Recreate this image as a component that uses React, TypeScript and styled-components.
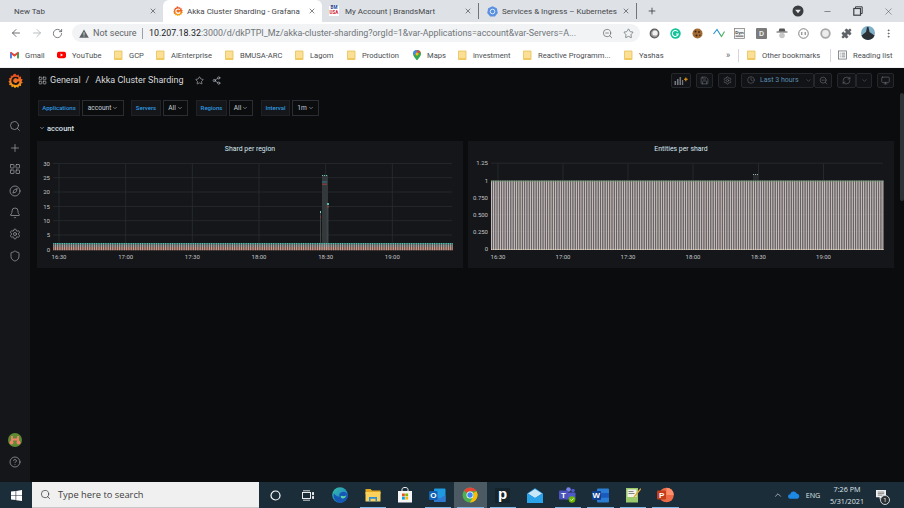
import React from 'react';
import styled, { createGlobalStyle } from 'styled-components';
import {
  ArrowLeft, ArrowRight, RotateCw, Star, ZoomOut, X, Plus, Minus, Puzzle, EllipsisVertical,
  Search, LayoutGrid, Compass, Bell, Settings, Shield, Share2, Save, Clock, ChevronDown,
  RefreshCw, Monitor, CircleHelp, ChevronUp,
} from 'lucide-react';

const Global = createGlobalStyle`
  html, body { margin: 0; padding: 0; background: #0b0c0e; overflow: hidden; }
  #root { width: 904px; height: 508px; overflow: hidden; }
  * { box-sizing: border-box; }
`;

const Page = styled.div`
  width: 904px; height: 508px; display: flex; flex-direction: column;
  font-family: Roboto, "Liberation Sans", sans-serif;
`;

/* ---------- tab strip ---------- */
const TabStrip = styled.div`
  height: 22px; background: #dee1e6; display: flex; align-items: stretch; flex: none;
`;
const Tab = styled.div<{ $w: number; $active?: boolean; $sep?: boolean; $pl?: number }>`
  width: ${p => p.$w}px; flex: none; display: flex; align-items: center; gap: 3px;
  padding: 0 6px 0 ${p => p.$pl ?? 14}px;
  font-size: 8px; color: #45484c;
  background: ${p => (p.$active ? '#ffffff' : 'transparent')};
  border-radius: ${p => (p.$active ? '6px 6px 0 0' : '0')};
  border-right: ${p => (p.$sep ? '1px solid #70757a' : '0')};
  background-clip: padding-box;
`;
const SepTab = styled(Tab)`
  height: 16px; align-self: center;
`;
const TabTitle = styled.span`
  flex: 1; overflow: hidden; white-space: nowrap; min-width: 0;
`;
const Favicon = styled.span`
  width: 11px; height: 11px; flex: none; display: flex; align-items: center; justify-content: center; margin-right: 1px;
`;
const BMIcon = styled.span`
  width: 10px; height: 10px; flex: none; display: flex; flex-direction: column; align-items: center; justify-content: center;
  font-size: 4.5px; line-height: 4.6px; font-weight: 700; color: #1d3f94; margin-right: 3px; background: #fff;
  & b { color: #d0142c; font-weight: 700; }
`;
const TabAdd = styled.div`
  width: 30px; display: flex; align-items: center; justify-content: center; color: #3c4043;
`;
const WinControls = styled.div`
  margin-left: auto; display: flex; align-items: center; color: #3c4043;
`;
const WinBtn = styled.span<{ $w: number }>`
  width: ${p => p.$w}px; display: flex; align-items: center; justify-content: center;
`;

/* ---------- toolbar ---------- */
const Toolbar = styled.div`
  height: 22px; background: #fff; display: flex; align-items: center; flex: none; padding-left: 5px;
`;
const NavBtn = styled.span<{ $dim?: boolean; $w?: number }>`
  width: ${p => p.$w ?? 21}px; display: flex; align-items: center; justify-content: center; flex: none;
  color: ${p => (p.$dim ? '#b3b6ba' : '#5f6368')};
`;
const Omnibox = styled.div`
  width: 568px; height: 18px; margin-left: 4px; flex: none; background: #f1f3f4; border-radius: 9px;
  display: flex; align-items: center; padding-left: 7px; font-size: 9px; color: #5f6368;
`;
const Secure = styled.span`
  margin-left: 4px; white-space: nowrap; width: 44px; flex: none;
`;
const OmniSep = styled.span`
  width: 1px; height: 11px; background: #9aa0a6; margin: 0 6px 0 5px; flex: none;
`;
const Url = styled.span`
  width: 442px; flex: none; white-space: nowrap; overflow: hidden; color: #70757a; font-size: 8.9px;
  & b { font-weight: 400; color: #202124; }
`;
const OmniIcon = styled.span<{ $ml: number }>`
  margin-left: ${p => p.$ml}px; display: flex; color: #5f6368; flex: none;
`;
const Extensions = styled.div`
  margin-left: 4px; display: flex; align-items: center;
`;
const Ext = styled.span`
  width: 21.3px; display: flex; align-items: center; justify-content: center; flex: none; color: #5f6368;
`;

/* ---------- bookmarks ---------- */
const BookmarkBar = styled.div`
  height: 24px; background: #fff; border-bottom: 1px solid #f1f2f3; display: flex; align-items: center; flex: none;
  padding: 0 0 1px 10px; font-size: 7.6px; color: #4a4d51;
`;
const Bookmark = styled.div<{ $w: number }>`
  width: ${p => p.$w}px; flex: none; display: flex; align-items: center; gap: 6px; white-space: nowrap; overflow: hidden;
`;
const BmIcon = styled.span`
  width: 9px; height: 10px; display: flex; align-items: center; justify-content: center; flex: none;
`;
const BarSep = styled.span<{ $mr: number }>`
  width: 1px; height: 13px; background: #d5d7da; margin-right: ${p => p.$mr}px; flex: none;
`;
const More = styled.span`
  width: 12px; flex: none; font-size: 9px; color: #5f6368;
`;

/* ---------- grafana ---------- */
const Body = styled.div`
  height: 414px; display: flex; flex: none; background: #0b0c0e;
`;
const Sidebar = styled.nav`
  width: 30px; flex: none; background: #141619; display: flex; flex-direction: column; align-items: center; color: #9a9da3;
  padding-bottom: 9px;
`;
const LogoCell = styled.div`
  height: 24px; flex: none; display: flex; align-items: center; margin-bottom: 23px;
`;
const SideItem = styled.div`
  height: 21.7px; flex: none; display: flex; align-items: center; justify-content: center;
`;
const SideBottom = styled.div`
  margin-top: auto; display: flex; flex-direction: column; align-items: center;
`;
const Main = styled.main`
  flex: 1; min-width: 0; position: relative; display: flex; flex-direction: column;
`;
const ScrollThumb = styled.div`
  position: absolute; right: 0; top: 25px; width: 4px; height: 108px; background: #2c3235; border-radius: 2px;
`;
const DashNav = styled.div`
  height: 24px; flex: none; display: flex; align-items: center; padding: 0 10px 0 8px; color: #d8d9da;
`;
const Crumb = styled.div`
  display: flex; align-items: center; font-size: 9px; color: #d8d9da; white-space: nowrap;
`;
const CrumbIcon = styled.span`
  display: flex; margin-right: 3px; color: #b9bcc0;
`;
const CrumbSlash = styled.span`
  margin: 0 6px 0 5px;
`;
const NavAction = styled.span<{ $ml: number }>`
  display: flex; margin-left: ${p => p.$ml}px; color: #c7d0d9;
`;
const NavRight = styled.div`
  margin-left: auto; display: flex; align-items: center; gap: 5px;
`;
const ToolBtn = styled.span<{ $w: number }>`
  width: ${p => p.$w}px; height: 15px; background: #111316; border: 1px solid #24272c; border-radius: 2px;
  display: flex; align-items: center; justify-content: center; color: #71767d; flex: none;
`;
const ToolGroup = styled.div`
  display: flex;
`;
const TimeText = styled.span`
  font-size: 7px; color: #5a8cae; margin: 0 6px 0 5px; white-space: nowrap;
`;
const TimeBtn = styled(ToolBtn)`
  justify-content: flex-start; padding-left: 5px;
`;
const Submenu = styled.div`
  flex: none; margin-top: 8px; padding-left: 8px; display: flex; height: 15.5px;
`;
const VarGroup = styled.div<{ $mr: number }>`
  display: flex; gap: 2px; margin-right: ${p => p.$mr}px;
`;
const VarLabel = styled.span<{ $w: number }>`
  width: ${p => p.$w}px; background: #141619; border: 1px solid #1f2126; color: #2f9ae0;
  font-size: 6px; font-weight: 500; padding-bottom: 1px; display: flex; align-items: center; justify-content: center; white-space: nowrap;
`;
const VarValue = styled.span<{ $w: number }>`
  width: ${p => p.$w}px; background: #0b0c0e; border: 1px solid #2a2d32; color: #c7d0d9;
  font-size: 6.6px; display: flex; align-items: center; justify-content: center; gap: 1px; white-space: nowrap;
`;
const RowTitle = styled.div`
  flex: none; height: 14px; margin-top: 5.5px; padding-left: 9px; display: flex; align-items: center; gap: 2px;
  font-size: 7.5px; font-weight: 500; color: #d8e2ea;
`;
const PanelRow = styled.div`
  flex: none; margin-top: 6px; padding-left: 7px; display: flex; gap: 5px;
`;
const Panel = styled.section`
  width: 426px; height: 127px; background: #141619; border: 0; display: flex; flex-direction: column;
`;
const PanelTitle = styled.h3`
  margin: 0; height: 14px; flex: none; padding-top: 1.5px; display: flex; align-items: center; justify-content: center;
  font-size: 6.9px; font-weight: 400; color: #d8e6ef;
`;
const ChartSvg = styled.svg`
  display: block; flex: none;
  & text { font-family: Roboto, "Liberation Sans", sans-serif; font-size: 6px; fill: #c3c5c8; }
`;

/* ---------- taskbar ---------- */
const Taskbar = styled.footer`
  height: 26px; flex: none; background: #1b2d39; display: flex; align-items: stretch;
`;
const Cell = styled.div<{ $w: number; $active?: boolean; $running?: boolean }>`
  width: ${p => p.$w}px; flex: none; position: relative; display: flex; align-items: center; justify-content: center;
  background: ${p => (p.$active ? '#4c5a64' : 'transparent')};
  ${p => p.$running && `&::after { content: ''; position: absolute; left: 3px; right: 3px; bottom: 0; height: 1px; background: #7db8e6; }`}
`;
const TaskSearch = styled.div`
  width: 227px; flex: none; background: #f0f0f0; border-bottom: 1px solid #c8c8c8; display: flex; align-items: center;
  padding-left: 8px; gap: 7px; font-size: 9.3px; color: #3d3d3d; font-family: "Open Sans", Roboto, sans-serif;
`;
const Tray = styled.div`
  margin-left: auto; padding-right: 12px; display: flex; align-items: center; color: #e8ecef; font-family: "Open Sans", Roboto, sans-serif;
`;
const TrayText = styled.span<{ $w: number }>`
  width: ${p => p.$w}px; flex: none; font-size: 7.2px; text-align: center; line-height: 12px; color: #dfe4e8;
`;
const NotifyCell = styled.div`
  width: 22px; flex: none; position: relative; height: 100%; display: flex; align-items: center; justify-content: center;
`;
const Badge = styled.span`
  position: absolute; right: 2px; bottom: 3px; width: 10px; height: 10px; border-radius: 50%;
  background: #2a2f33; border: 1px solid #cfd3d6; color: #fff; font-size: 6px; display: flex; align-items: center; justify-content: center;
`;
const AppGlyph = styled.text`
  font-family: "Liberation Sans", sans-serif; font-weight: 700;
`;

/* ---------- drawings ---------- */
const GrafanaLogo = ({ s, id }: { s: number; id: string }) => (
  <svg width={s} height={s} viewBox="0 0 24 24">
    <defs>
      <linearGradient id={id} x1="0" y1="0" x2="0" y2="1">
        <stop offset="0" stopColor="#e8441f" />
        <stop offset="0.6" stopColor="#f27a20" />
        <stop offset="1" stopColor="#fbb40a" />
      </linearGradient>
    </defs>
    <path fill={`url(#${id})`} fillRule="evenodd"
      d="M12 1l2 3 3-1.5.7 3.3 3.4-.2-.5 3.4 3 1.3-1.9 2.8 2 2.6-3 1.5.2 3.4-3.4-.3-1 3.2-3-1.6-2.5 2.4-2-2.7-3.2 1.2-.6-3.4-3.4-.2.8-3.3L.6 14l2.2-2.6L1.3 8.6l3.2-1-.2-3.4 3.4.3L9 1.4z
      M12 6a6.5 6.5 0 1 0 6.4 7.6h-3a3.6 3.6 0 1 1-.4-3.6l2.3-2A6.5 6.5 0 0 0 12 6z" />
  </svg>
);

const Folder = () => (
  <svg width="9" height="10" viewBox="0 0 9 10">
    <path d="M0.5 1h7.5v8.5H0.5z" fill="#fadf94" stroke="#e6bf56" strokeWidth="0.8" />
    <path d="M1 8h7v1.5H1z" fill="#f2c95c" />
  </svg>
);

const Gmail = () => (
  <svg width="10" height="8" viewBox="0 0 10 8">
    <path d="M0 1.2v6.3h2V3.6L5 6l3-2.4v3.9h2V1.2L8.8.3 5 3.3 1.2.3z" fill="#ea4335" />
    <path d="M0 1.2v6.3h2V3z" fill="#4285f4" />
    <path d="M8 3v4.5h2V1.2z" fill="#34a853" />
  </svg>
);
const YouTube = () => (
  <svg width="10" height="8" viewBox="0 0 10 8">
    <rect width="10" height="7" y="0.5" rx="2" fill="#f00" />
    <path d="M4 2.4L6.8 4 4 5.6z" fill="#fff" />
  </svg>
);
const MapsPin = () => (
  <svg width="8" height="11" viewBox="0 0 8 11">
    <path d="M4 0a4 4 0 0 1 4 4c0 2.6-2.8 4-4 7C2.800 8 0 6.600 0 4a4 4 0 0 1 4-4z" fill="#34a853" />
    <path d="M1.200 1.200A4 4 0 0 1 4 0l0 2.500L1.800 5.300 0.300 4a4 4 0 0 1 .9-2.800z" fill="#4285f4" />
    <path d="M4 0a4 4 0 0 1 3.700 2.600L4 3z" fill="#ea4335" />
    <circle cx="4" cy="4" r="1.500" fill="#fbbc04" />
  </svg>
);
const Kube = () => (
  <svg width="11" height="11" viewBox="0 0 11 11">
    <path d="M5.500 0.300l4.300 2 1 4.600-3 3.700H3.200l-3-3.700 1-4.600z" fill="#5b8fe0" />
    <circle cx="5.500" cy="5.500" r="2.300" fill="none" stroke="#e8f0fc" strokeWidth="0.9" />
  </svg>
);
const Warn = () => (
  <svg width="10" height="9" viewBox="0 0 10 9"><path d="M5 0.500L9.800 8.800H0.200z" fill="#5f6368" /><path d="M4.600 3.300h.8v3h-.8zM4.600 6.800h.8v.8h-.8z" fill="#f1f3f4" /></svg>
);

const ExtRing = () => (
  <svg width="11" height="11" viewBox="0 0 11 11"><circle cx="5.500" cy="5.500" r="4.300" fill="#9a9a9a" /><circle cx="6" cy="5" r="2.600" fill="#f1f1f1" /><circle cx="5.500" cy="5.500" r="4.300" fill="none" stroke="#5c5c5c" strokeWidth="1.200" /></svg>
);
const ExtGrammarly = () => (
  <svg width="11" height="11" viewBox="0 0 11 11"><circle cx="5.500" cy="5.500" r="5.200" fill="#15c39a" /><path d="M7.800 3.700A3 3 0 1 0 8.300 6H6" fill="none" stroke="#fff" strokeWidth="1.100" /></svg>
);
const ExtCookie = () => (
  <svg width="11" height="11" viewBox="0 0 11 11"><circle cx="5.500" cy="5.500" r="5" fill="#a06a35" /><circle cx="3.500" cy="3.500" r="1" fill="#3f2410" /><circle cx="7" cy="4" r="0.900" fill="#3f2410" /><circle cx="4.500" cy="7.500" r="1" fill="#3f2410" /><circle cx="7.800" cy="7.200" r="0.800" fill="#3f2410" /></svg>
);
const ExtWave = () => (
  <svg width="12" height="10" viewBox="0 0 12 10"><path d="M0.500 6L4 1.500 7.500 7" fill="none" stroke="#2a93c9" strokeWidth="1.100" /><path d="M7 6.500l1.500 2L11.500 3.500" fill="none" stroke="#44b25b" strokeWidth="1.100" /></svg>
);
const ExtDyn = () => (
  <svg width="11" height="11" viewBox="0 0 11 11"><rect x="0.500" y="0.500" width="10" height="10" fill="#f4f4f4" stroke="#777" strokeWidth="0.700" /><AppGlyph x="1.300" y="5.500" fontSize="4.400" fill="#333">Dyn</AppGlyph><rect x="1.500" y="7.500" width="8" height="1.300" fill="#777" /></svg>
);
const ExtD = () => (
  <svg width="11" height="11" viewBox="0 0 11 11"><rect width="11" height="11" rx="1" fill="#7b7b7b" /><AppGlyph x="3" y="8" fontSize="7" fill="#eee">D</AppGlyph></svg>
);
const ExtSpy = () => (
  <svg width="12" height="11" viewBox="0 0 12 11"><path d="M3.500 0.500h5l1 3h-7z" fill="#555" /><rect x="0.500" y="3.500" width="11" height="1" fill="#555" /><circle cx="6" cy="7.500" r="2.800" fill="#c7c7c7" /></svg>
);
const ExtFace = () => (
  <svg width="11" height="11" viewBox="0 0 11 11"><circle cx="5.500" cy="5.500" r="4.800" fill="#fafafa" stroke="#666" strokeWidth="0.800" /><path d="M3.800 4v3M7.200 4v3" stroke="#666" strokeWidth="0.900" /></svg>
);
const ExtGrey = () => (
  <svg width="11" height="11" viewBox="0 0 11 11"><circle cx="5.500" cy="5.500" r="4.300" fill="#ececec" stroke="#a8a8a8" strokeWidth="1.800" /></svg>
);
const Avatar = () => (
  <svg width="14" height="14" viewBox="0 0 14 14">
    <circle cx="7" cy="7" r="7" fill="#7fb0c7" />
    <path d="M0.500 9.500L5 6l1-5h1.500l1 5 5 3.500A7 7 0 0 1 .5 9.500z" fill="#2b3036" />
  </svg>
);
const ProfileDot = () => (
  <svg width="12" height="12" viewBox="0 0 12 12"><circle cx="6" cy="6" r="5.500" fill="#3a3d40" /><path d="M3.200 4.700h5.600L6 8.300z" fill="#e8e8e8" /></svg>
);
const Restore = () => (
  <svg width="10" height="10" viewBox="0 0 10 10"><path d="M2.500 2.500V.8h6.700v6.700H7.500" fill="none" stroke="#3c4043" strokeWidth="1" /><rect x=".8" y="2.500" width="6.700" height="6.700" fill="none" stroke="#3c4043" strokeWidth="1.200" /></svg>
);
const ReadingList = () => (
  <svg width="10" height="10" viewBox="0 0 10 10"><rect x="0.500" y="0.500" width="9" height="9" fill="none" stroke="#5f6368" strokeWidth="0.800" /><path d="M2 3h1M4 3h4M2 5h1M4 5h4M2 7h1M4 7h4" stroke="#5f6368" strokeWidth="0.800" /></svg>
);
const PanelAddIcon = () => (
  <svg width="14" height="9" viewBox="0 0 14 9"><path d="M0.500 9V5h1.600v4zM3 9V3h1.600v6zM5.500 9V1h1.600v8zM8 9V4h1.200v5z" fill="#71767d" /><path d="M10 3.300h3.700M11.850 1.400v3.800" stroke="#eb9b18" strokeWidth="1.100" /></svg>
);

const WinLogo = () => (
  <svg width="11" height="11" viewBox="0 0 11 11"><path d="M0 1.600L4.600 1v4.200H0zM5.200.9L11 0v5.200H5.200zM0 5.800h4.600V10L0 9.400zM5.200 5.800H11V11l-5.800-.8z" fill="#fff" /></svg>
);
const Cortana = () => (
  <svg width="11" height="11" viewBox="0 0 11 11"><circle cx="5.500" cy="5.500" r="4.500" fill="none" stroke="#fff" strokeWidth="1.200" /></svg>
);
const TaskView = () => (
  <svg width="12" height="11" viewBox="0 0 12 11"><rect x="0.500" y="2.500" width="8" height="6" fill="none" stroke="#fff" strokeWidth="0.900" /><path d="M1 0.800h7M1 10.200h7M10.500 2.500h1.200v2.200h-1.200zM10.500 6.500h1.200v2h-1.200z" stroke="#fff" strokeWidth="0.800" fill="#fff" /></svg>
);
const Edge = () => (
  <svg width="16" height="16" viewBox="0 0 16 16">
    <defs><linearGradient id="edg" x1="0" y1="0" x2="1" y2="1"><stop offset="0" stopColor="#35c1a5" /><stop offset="1" stopColor="#1b6fd0" /></linearGradient></defs>
    <circle cx="8" cy="8" r="7.800" fill="url(#edg)" />
    <path d="M16 9.500c-.3-3-3-5-5.500-4.600C8 5.300 6.500 7.500 8 9.600c-3 .5-4.800-1.300-6-3C.5 10 3 15.500 8 15.800c3 .1 6-2 8-6.300z" fill="#1557b5" />
    <path d="M9 8.800c1.500.7 4 .6 5.400-.5-1 3-3.400 3.600-4.500 3-1.200-.7-1.400-1.700-.9-2.500z" fill="#5fd6a3" />
  </svg>
);
const Explorer = () => (
  <svg width="16" height="14" viewBox="0 0 16 14">
    <path d="M0.500 1h5l1.500 1.500h8.500V6H.5z" fill="#e2a823" />
    <path d="M0.500 4h15v9.500H.5z" fill="#fbd15b" />
    <path d="M4 9h8v4.500H10.500V10.700h-5v2.800H4z" fill="#2d8fd5" />
  </svg>
);
const Store = () => (
  <svg width="16" height="16" viewBox="0 0 16 16">
    <path d="M1 4h14v11.500H1z" fill="#f5f5f5" />
    <path d="M5 5V2.500C5 1 6.500.5 8 .5s3 .5 3 2V5" fill="none" stroke="#f5f5f5" strokeWidth="1" />
    <rect x="5" y="6.500" width="2.800" height="2.800" fill="#f25022" /><rect x="8.300" y="6.500" width="2.800" height="2.800" fill="#7fba00" />
    <rect x="5" y="9.800" width="2.800" height="2.800" fill="#00a4ef" /><rect x="8.300" y="9.800" width="2.800" height="2.800" fill="#ffb900" />
  </svg>
);
const Outlook = () => (
  <svg width="17" height="15" viewBox="0 0 17 15">
    <rect x="5" y="0.500" width="11.500" height="13.500" rx="1" fill="#1f9ae0" />
    <path d="M5 7l5.700 3.500L16.500 7v7H5z" fill="#2f78cf" />
    <rect x="0" y="3" width="8.500" height="9" rx="1" fill="#0f5fb3" />
    <AppGlyph x="1.200" y="10.300" fontSize="8" fill="#fff">O</AppGlyph>
  </svg>
);
const Chrome = () => (
  <svg width="16" height="16" viewBox="0 0 16 16">
    <circle cx="8" cy="8" r="7.500" fill="#4caf50" />
    <path d="M8 .5a7.500 7.500 0 0 1 6.500 3.750H8A3.750 3.750 0 0 0 4.700 6.100L2.100 3.400A7.500 7.500 0 0 1 8 .5z" fill="#ea4335" />
    <path d="M14.500 4.250A7.500 7.500 0 0 1 8 15.500l3.300-5.700A3.750 3.750 0 0 0 11.300 6z" fill="#fbbc04" />
    <circle cx="8" cy="8" r="3.500" fill="#fff" /><circle cx="8" cy="8" r="2.700" fill="#4285f4" />
  </svg>
);
const PApp = () => (
  <svg width="15" height="15" viewBox="0 0 15 15"><rect width="15" height="15" fill="#15232d" /><AppGlyph x="3" y="11.400" fontSize="15" fill="#fff">p</AppGlyph></svg>
);
const Mail = () => (
  <svg width="16" height="15" viewBox="0 0 16 15">
    <path d="M8 0L0 5.500V15h16V5.500z" fill="#1b83cf" />
    <path d="M8 1L1 5.500 8 10l7-4.500z" fill="#c7e7f9" />
    <path d="M0 5.500L8 10l8-4.500V15H0z" fill="#2aa3e8" />
  </svg>
);
const Teams = () => (
  <svg width="17" height="16" viewBox="0 0 17 16">
    <circle cx="9.500" cy="2.500" r="2.300" fill="#7b83eb" /><circle cx="14" cy="3.500" r="1.800" fill="#5059c9" />
    <rect x="7" y="5.500" width="9.500" height="7" rx="1" fill="#5059c9" />
    <rect x="0" y="3.500" width="9" height="9" rx="1" fill="#4b53bc" />
    <AppGlyph x="2" y="10.800" fontSize="8" fill="#fff">T</AppGlyph>
    <circle cx="13" cy="12.500" r="3.300" fill="#6bb700" /><path d="M11.300 12.500l1.200 1.200 2-2.300" fill="none" stroke="#fff" strokeWidth="0.800" />
  </svg>
);
const Word = () => (
  <svg width="17" height="15" viewBox="0 0 17 15">
    <rect x="5" y="0.500" width="12" height="14" rx="1" fill="#2b7cd3" />
    <rect x="5" y="5" width="12" height="4.700" fill="#185abd" />
    <rect x="0" y="3" width="9" height="9" rx="1" fill="#103f91" />
    <AppGlyph x="0.600" y="10.400" fontSize="8" fill="#fff">W</AppGlyph>
  </svg>
);
const Notepad = () => (
  <svg width="16" height="16" viewBox="0 0 16 16">
    <rect x="1" y="1" width="12" height="14.500" fill="#9cc96b" />
    <rect x="2.500" y="2.500" width="9" height="7.500" fill="#f2f2ea" />
    <path d="M3.500 4.500h5M3.500 6.500h6" stroke="#555" strokeWidth="0.700" />
    <path d="M15.500 1L9 9l-1 2 2-1L16 2.500z" fill="#e0a735" />
  </svg>
);
const PowerPoint = () => (
  <svg width="17" height="16" viewBox="0 0 17 16">
    <circle cx="9.500" cy="8" r="7.300" fill="#ed6c47" />
    <path d="M9.500.7a7.300 7.300 0 0 1 7.300 7.300H9.500z" fill="#ff8f6b" />
    <rect x="0" y="3.500" width="9" height="9" rx="1" fill="#c43e1c" />
    <AppGlyph x="2" y="10.800" fontSize="8" fill="#fff">P</AppGlyph>
  </svg>
);
const CloudIcon = () => (
  <svg width="12" height="8" viewBox="0 0 12 8"><path d="M2.500 7.800a2.300 2.300 0 0 1-.3-4.600A3.500 3.500 0 0 1 8.700 2.400 2.800 2.800 0 0 1 9.500 7.800z" fill="#1e88e5" /></svg>
);
const NotifyIcon = () => (
  <svg width="10" height="10" viewBox="0 0 11 11"><path d="M0 0h11v8H6L4 10.500V8H0z" fill="#f0f0f0" /><path d="M2 2.300h7M2 4h7M2 5.700h5" stroke="#333" strokeWidth="0.600" /></svg>
);
const UserAvatar = () => (
  <svg width="14" height="14" viewBox="0 0 14 14">
    <circle cx="7" cy="7" r="7" fill="#5d8a32" />
    <path d="M4 3v8M10 3v8M4 6.500h6" stroke="#f2836b" strokeWidth="1.800" />
    <circle cx="3.500" cy="9.500" r="2" fill="#f2836b" /><circle cx="10.500" cy="9.500" r="2" fill="#f2836b" />
  </svg>
);

/* ---------- charts ---------- */
const LEFT_Y = [[163.4, '30'], [177.7, '25'], [192, '20'], [206.4, '15'], [220.7, '10'], [235, '5'], [249.3, '0']] as const;
const LEFT_X = [[59, '16:30'], [125.7, '17:00'], [192.3, '17:30'], [259, '18:00'], [325.7, '18:30'], [392.3, '19:00']] as const;
const RIGHT_Y = [[163.2, '1.25'], [180.6, '1'], [197.6, '0.750'], [214.6, '0.500'], [231.6, '0.250'], [249, '0']] as const;
const RIGHT_X = [[498, '16:30'], [563, '17:00'], [628, '17:30'], [693, '18:00'], [758.500, '18:30'], [823.500, '19:00']] as const;

const W = 426, H = 113, TOP = 155;

const bars = (from: number, to: number, period: number) => {
  const xs: number[] = [];
  for (let x = from; x < to; x += period) xs.push(x);
  return xs;
};

const Axis = ({ ox, ys, xs, l, r, labelX }: { ox: number; ys: readonly (readonly [number, string])[]; xs: readonly (readonly [number, string])[]; l: number; r: number; labelX: number }) => (
  <g>
    {ys.map(([y, t]) => (
      <g key={t}>
        <line x1={l - ox} x2={r - ox} y1={y - TOP} y2={y - TOP} stroke="#2a2d31" strokeWidth="0.800" />
        <text x={labelX - ox} y={y - TOP + 2.200} textAnchor="end">{t}</text>
      </g>
    ))}
    {xs.map(([x, t]) => (
      <g key={t}>
        <line x1={x - ox} x2={x - ox} y1={163.400 - TOP} y2={250 - TOP} stroke="#2a2d31" strokeWidth="0.800" />
        <text x={x - ox} y={259 - TOP} textAnchor="middle">{t}</text>
      </g>
    ))}
  </g>
);

const BAR = 1.3;

const ShardChart = () => {
  const ox = 37;
  const xs = bars(53.2, 452, 1.77);
  return (
    <ChartSvg width={W} height={H} viewBox={`0 0 ${W} ${H}`}>
      <Axis ox={ox} ys={LEFT_Y} xs={LEFT_X} l={53} r={452} labelX={50} />
      <rect x={322 - ox} y={175 - TOP} width={6} height={75} fill="#33383a" />
      <rect x={320 - ox} y={211 - TOP} width={1} height={39} fill="#3f4445" />
      <rect x={326.500 - ox} y={203 - TOP} width={2} height={47} fill="#3f4546" />
      <path d={`M${322 - ox} ${175.500 - TOP}h1m1 0h1m1 0h1`} stroke="#6fc4b0" strokeWidth="1" />
      <rect x={322 - ox} y={181 - TOP} width={5} height={2} fill="#2f5a66" />
      <rect x={322 - ox} y={183.500 - TOP} width={5} height={1.500} fill="#7c403c" />
      <rect x={320 - ox} y={211 - TOP} width={1} height={2} fill="#6fd0bb" />
      <rect x={320 - ox} y={216 - TOP} width={1} height={2} fill="#7c403c" />
      <rect x={327 - ox} y={203 - TOP} width={2} height={2} fill="#5eb9a7" />
      <rect x={327 - ox} y={206 - TOP} width={2} height={1.500} fill="#7c403c" />
      {xs.map(x => (
        <g key={x}>
          <rect x={x - ox} y={243 - TOP} width={BAR} height={1.200} fill="#4fc4b2" />
          <rect x={x - ox} y={244.200 - TOP} width={BAR} height={2.800} fill="#a5a3a0" />
          <rect x={x - ox} y={247 - TOP} width={BAR} height={3.300} fill="#cf9a89" />
        </g>
      ))}
    </ChartSvg>
  );
};

const EntitiesChart = () => {
  const ox = 468;
  const xs = bars(491, 883, 1.77);
  return (
    <ChartSvg width={W} height={H} viewBox={`0 0 ${W} ${H}`}>
      <Axis ox={ox} ys={RIGHT_Y} xs={RIGHT_X} l={491} r={883} labelX={488} />
      <rect x={753 - ox} y={174 - TOP} width={6} height={7} fill="#262a2c" />
      <path d={`M${753 - ox} ${174.500 - TOP}h1m1 0h1m1 0h1`} stroke="#9ab0a8" strokeWidth="1" />
      {xs.map(x => (
        <g key={x}>
          <rect x={x - ox} y={180.700 - TOP} width={BAR} height={69.300} fill="#c4bab9" />
          <rect x={x - ox} y={180.700 - TOP} width={BAR} height={1} fill="#74a878" />
          <rect x={x - ox} y={249 - TOP} width={BAR} height={1} fill="#e0d2bc" />
        </g>
      ))}
    </ChartSvg>
  );
};

export default function App() {
  const bookmarks: [string, number][] = [
    ['GCP', 42], ['AlEnterprise', 69], ['BMUSA-ARC', 70], ['Lagom', 52], ['Production', 65],
  ];
  return (
    <Page>
      <Global />
      <TabStrip>
        <Tab $w={163}>
          <TabTitle>New Tab</TabTitle>
          <X size={8} strokeWidth={2} />
        </Tab>
        <Tab $w={159} $active $pl={9}>
          <Favicon><GrafanaLogo s={10} id="gfav" /></Favicon>
          <TabTitle>Akka Cluster Sharding - Grafana</TabTitle>
          <X size={8} strokeWidth={2} />
        </Tab>
        <SepTab $w={157} $sep $pl={7}>
          <BMIcon><span>BM</span><b>USA</b></BMIcon>
          <TabTitle>My Account | BrandsMart</TabTitle>
          <X size={8} strokeWidth={2} />
        </SepTab>
        <SepTab $w={158} $sep $pl={8}>
          <Favicon><Kube /></Favicon>
          <TabTitle>Services &amp; Ingress – Kubernetes D</TabTitle>
          <X size={8} strokeWidth={2} />
        </SepTab>
        <TabAdd><Plus size={10} strokeWidth={2} /></TabAdd>
        <WinControls>
          <WinBtn $w={30}><ProfileDot /></WinBtn>
          <WinBtn $w={29}><Minus size={9} strokeWidth={1.500} /></WinBtn>
          <WinBtn $w={31}><Restore /></WinBtn>
          <WinBtn $w={31}><X size={11} strokeWidth={1} /></WinBtn>
        </WinControls>
      </TabStrip>

      <Toolbar>
        <NavBtn><ArrowLeft size={12} strokeWidth={1.800} /></NavBtn>
        <NavBtn $dim><ArrowRight size={12} strokeWidth={1.800} /></NavBtn>
        <NavBtn><RotateCw size={11} strokeWidth={1.800} /></NavBtn>
        <Omnibox>
          <Warn />
          <Secure>Not secure</Secure>
          <OmniSep />
          <Url><b>10.207.18.32</b>:3000/d/dkPTPI_Mz/akka-cluster-sharding?orgId=1&amp;var-Applications=account&amp;var-Servers=A...</Url>
          <OmniIcon $ml={11}><ZoomOut size={11} strokeWidth={1.500} /></OmniIcon>
          <OmniIcon $ml={10}><Star size={11} strokeWidth={1.500} /></OmniIcon>
        </Omnibox>
        <Extensions>
          <Ext><ExtRing /></Ext>
          <Ext><ExtGrammarly /></Ext>
          <Ext><ExtCookie /></Ext>
          <Ext><ExtWave /></Ext>
          <Ext><ExtDyn /></Ext>
          <Ext><ExtD /></Ext>
          <Ext><ExtSpy /></Ext>
          <Ext><ExtFace /></Ext>
          <Ext><ExtGrey /></Ext>
          <Ext><Puzzle size={11} fill="#5f6368" strokeWidth={1} /></Ext>
          <Ext><Avatar /></Ext>
          <Ext><EllipsisVertical size={11} strokeWidth={2} /></Ext>
        </Extensions>
      </Toolbar>

      <BookmarkBar>
        <Bookmark $w={47}><BmIcon><Gmail /></BmIcon>Gmail</Bookmark>
        <Bookmark $w={57}><BmIcon><YouTube /></BmIcon>YouTube</Bookmark>
        {bookmarks.map(([t, w]) => (
          <Bookmark key={t} $w={w}><BmIcon><Folder /></BmIcon>{t}</Bookmark>
        ))}
        <Bookmark $w={46}><BmIcon><MapsPin /></BmIcon>Maps</Bookmark>
        <Bookmark $w={65}><BmIcon><Folder /></BmIcon>investment</Bookmark>
        <Bookmark $w={101}><BmIcon><Folder /></BmIcon>Reactive Programm...</Bookmark>
        <Bookmark $w={102}><BmIcon><Folder /></BmIcon>Yashas</Bookmark>
        <More>»</More>
        <BarSep $mr={8} />
        <Bookmark $w={83}><BmIcon><Folder /></BmIcon>Other bookmarks</Bookmark>
        <BarSep $mr={7} />
        <Bookmark $w={58}><BmIcon><ReadingList /></BmIcon>Reading list</Bookmark>
      </BookmarkBar>

      <Body>
        <Sidebar>
          <LogoCell><GrafanaLogo s={15} id="gmain" /></LogoCell>
          <SideItem><Search size={12} strokeWidth={1.500} /></SideItem>
          <SideItem><Plus size={12} strokeWidth={1.500} /></SideItem>
          <SideItem><LayoutGrid size={12} strokeWidth={1.500} /></SideItem>
          <SideItem><Compass size={12} strokeWidth={1.500} /></SideItem>
          <SideItem><Bell size={12} strokeWidth={1.500} /></SideItem>
          <SideItem><Settings size={12} strokeWidth={1.500} /></SideItem>
          <SideItem><Shield size={12} strokeWidth={1.500} /></SideItem>
          <SideBottom>
            <SideItem><UserAvatar /></SideItem>
            <SideItem><CircleHelp size={12} strokeWidth={1.500} /></SideItem>
          </SideBottom>
        </Sidebar>
        <Main>
          <DashNav>
            <Crumb>
              <CrumbIcon><LayoutGrid size={9} strokeWidth={1.800} /></CrumbIcon>
              General<CrumbSlash>/</CrumbSlash>Akka Cluster Sharding
            </Crumb>
            <NavAction $ml={11}><Star size={9} strokeWidth={1.500} /></NavAction>
            <NavAction $ml={8}><Share2 size={9} strokeWidth={1.500} /></NavAction>
            <NavRight>
              <ToolBtn $w={20}><PanelAddIcon /></ToolBtn>
              <ToolBtn $w={17}><Save size={9} strokeWidth={1.500} /></ToolBtn>
              <ToolBtn $w={18}><Settings size={9} strokeWidth={1.500} /></ToolBtn>
              <ToolGroup>
                <TimeBtn $w={73}>
                  <Clock size={8} strokeWidth={1.500} />
                  <TimeText>Last 3 hours</TimeText>
                  <ChevronDown size={7} strokeWidth={1.500} />
                </TimeBtn>
                <ToolBtn $w={18}><ZoomOut size={9} strokeWidth={1.500} /></ToolBtn>
              </ToolGroup>
              <ToolGroup>
                <ToolBtn $w={19}><RefreshCw size={9} strokeWidth={1.500} /></ToolBtn>
                <ToolBtn $w={16}><ChevronDown size={7} strokeWidth={1.500} /></ToolBtn>
              </ToolGroup>
              <ToolBtn $w={17}><Monitor size={9} strokeWidth={1.500} /></ToolBtn>
            </NavRight>
          </DashNav>

          <Submenu>
            <VarGroup $mr={7}>
              <VarLabel $w={42}>Applications</VarLabel>
              <VarValue $w={42}>account<ChevronDown size={6} /></VarValue>
            </VarGroup>
            <VarGroup $mr={8}>
              <VarLabel $w={30}>Servers</VarLabel>
              <VarValue $w={25}>All<ChevronDown size={6} /></VarValue>
            </VarGroup>
            <VarGroup $mr={8}>
              <VarLabel $w={31}>Regions</VarLabel>
              <VarValue $w={24}>All<ChevronDown size={6} /></VarValue>
            </VarGroup>
            <VarGroup $mr={0}>
              <VarLabel $w={29}>Interval</VarLabel>
              <VarValue $w={27}>1m<ChevronDown size={6} /></VarValue>
            </VarGroup>
          </Submenu>

          <RowTitle><ChevronDown size={6} strokeWidth={2} />account</RowTitle>

          <PanelRow>
            <Panel>
              <PanelTitle>Shard per region</PanelTitle>
              <ShardChart />
            </Panel>
            <Panel>
              <PanelTitle>Entities per shard</PanelTitle>
              <EntitiesChart />
            </Panel>
          </PanelRow>
          <ScrollThumb />
        </Main>
      </Body>

      <Taskbar>
        <Cell $w={32}><WinLogo /></Cell>
        <TaskSearch><Search size={11} strokeWidth={1.500} color="#333" />Type here to search</TaskSearch>
        <Cell $w={32}><Cortana /></Cell>
        <Cell $w={33}><TaskView /></Cell>
        <Cell $w={32.500}><Edge /></Cell>
        <Cell $w={32.500} $running><Explorer /></Cell>
        <Cell $w={32.500}><Store /></Cell>
        <Cell $w={32.500} $running><Outlook /></Cell>
        <Cell $w={32.500} $active $running><Chrome /></Cell>
        <Cell $w={32.500} $running><PApp /></Cell>
        <Cell $w={32.500}><Mail /></Cell>
        <Cell $w={32.500} $running><Teams /></Cell>
        <Cell $w={32.500} $running><Word /></Cell>
        <Cell $w={32.500} $running><Notepad /></Cell>
        <Cell $w={32.500} $running><PowerPoint /></Cell>
        <Tray>
          <Cell $w={16}><ChevronUp size={10} strokeWidth={1.500} /></Cell>
          <Cell $w={16}><CloudIcon /></Cell>
          <TrayText $w={22}>ENG</TrayText>
          <TrayText $w={46}>7:26 PM<br />5/31/2021</TrayText>
          <NotifyCell><NotifyIcon /><Badge>1</Badge></NotifyCell>
        </Tray>
      </Taskbar>
    </Page>
  );
}
